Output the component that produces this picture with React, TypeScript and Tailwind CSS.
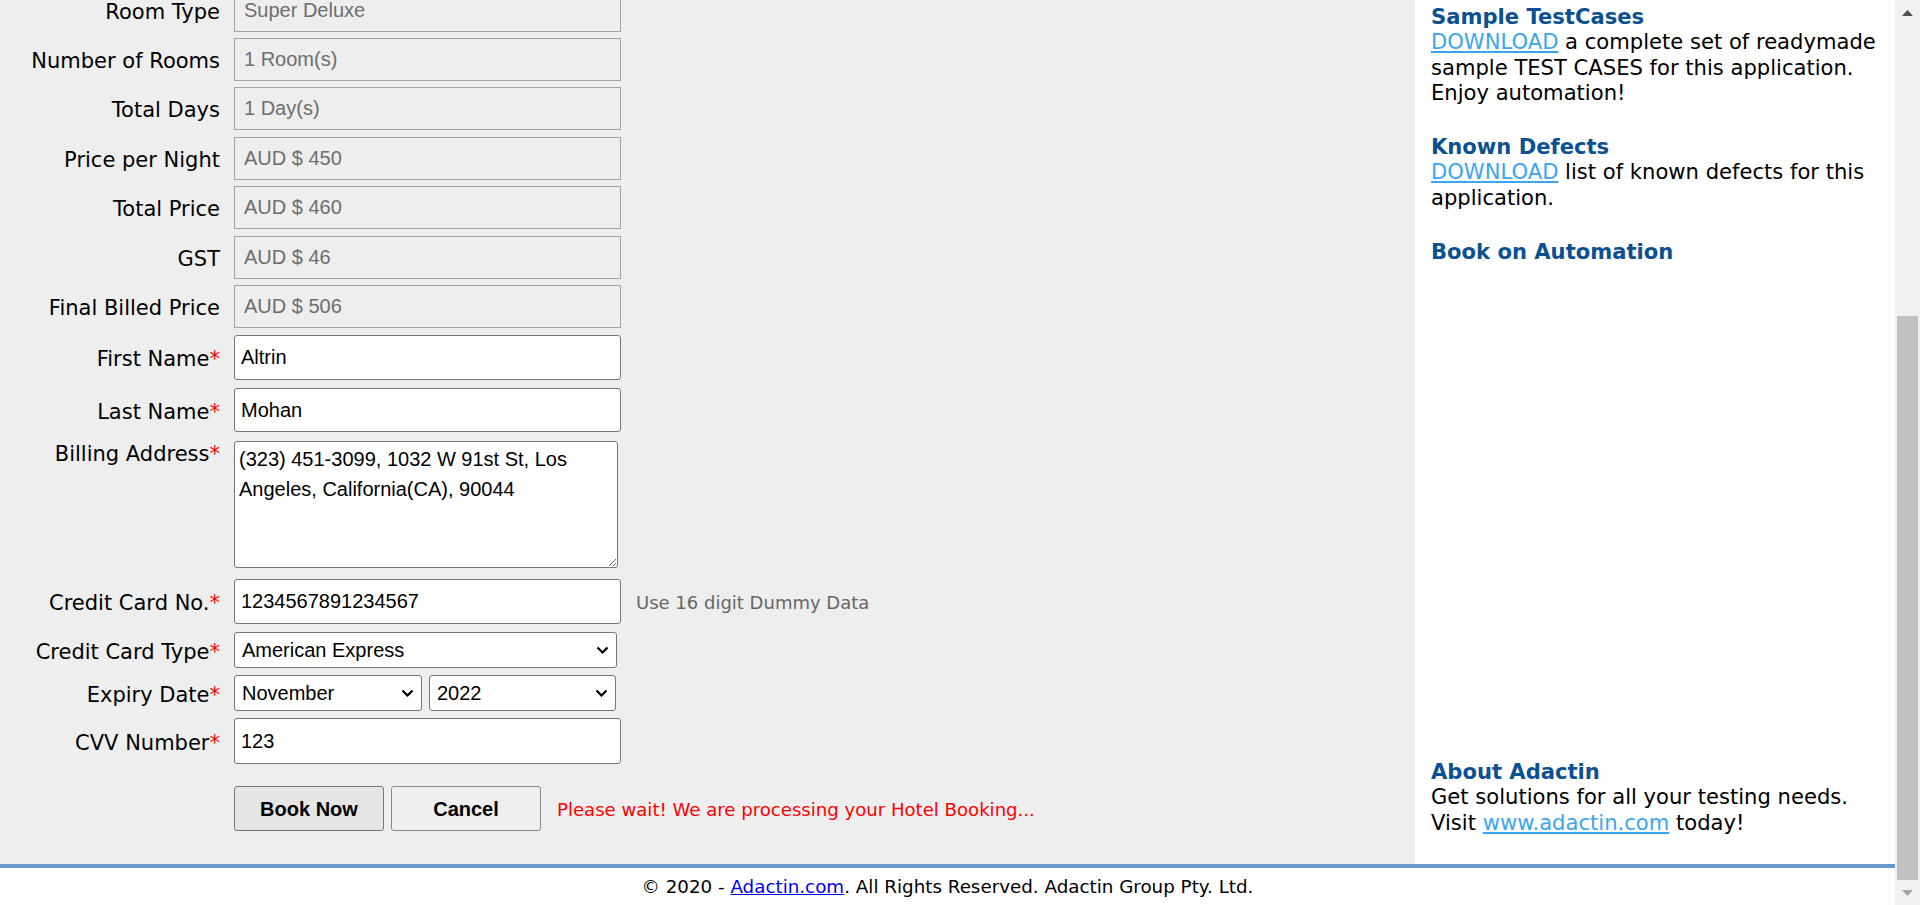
import React from "react";

function Label({ text, req, padClass }: { text: string; req?: boolean; padClass?: string }) {
  return (
    <div
      className={
        "w-[220px] shrink-0 text-right font-['DejaVu_Sans',sans-serif] text-[21px] leading-[25px] text-black " +
        (padClass ?? "pt-[4px]")
      }
    >
      {text}
      {req && <span className="text-[#ff0000]">*</span>}
    </div>
  );
}

function ReadRow({ label, value, rowClass }: { label: string; value: string; rowClass: string }) {
  return (
    <div className={"flex items-center gap-[14px] " + rowClass}>
      <Label text={label} />
      <input
        readOnly
        defaultValue={value}
        className="h-full w-[387px] border border-[#a3a3a3] bg-[#eeeeee] pl-[9px] font-['Liberation_Sans',Arial,sans-serif] text-[20px] text-[#6d6d6d] outline-none"
      />
    </div>
  );
}

function EditRow({ label, value, rowClass, children }: { label: string; value: string; rowClass: string; children?: React.ReactNode }) {
  return (
    <div className={"flex items-center gap-[14px] " + rowClass}>
      <Label text={label} req />
      <input
        defaultValue={value}
        className="h-full w-[387px] rounded-[3px] border border-[#767676] bg-white pl-[6px] font-['Liberation_Sans',Arial,sans-serif] text-[20px] text-black outline-none"
      />
      {children}
    </div>
  );
}

function Chevron() {
  return (
    <svg width="13" height="8" viewBox="0 0 13 8" className="shrink-0">
      <path d="M1.5 1.5 L6.5 6.5 L11.5 1.5" fill="none" stroke="#000" strokeWidth="2.2" />
    </svg>
  );
}

function SelectBox({ value, widthClass }: { value: string; widthClass: string }) {
  return (
    <div
      className={
        "flex h-full items-center justify-between rounded-[3px] border border-[#767676] bg-white pl-[7px] pr-[7px] font-['Liberation_Sans',Arial,sans-serif] text-[20px] text-black " +
        widthClass
      }
    >
      <span>{value}</span>
      <Chevron />
    </div>
  );
}

export default function App() {
  return (
    <div className="flex h-[905px] w-[1920px] overflow-hidden bg-white">
      <div className="flex w-[1895px] flex-col">
        <div className="flex h-[864px]">
          {/* main form */}
          <main className="w-[1415px] overflow-hidden bg-[#eeeeee]">
            <div className="flex flex-col">
              <ReadRow label="Room Type" value="Super Deluxe" rowClass="-mt-[11px] h-[43px]" />
              <ReadRow label="Number of Rooms" value="1 Room(s)" rowClass="mt-[6px] h-[43px]" />
              <ReadRow label="Total Days" value="1 Day(s)" rowClass="mt-[6px] h-[43px]" />
              <ReadRow label="Price per Night" value="AUD $ 450" rowClass="mt-[7px] h-[43px]" />
              <ReadRow label="Total Price" value="AUD $ 460" rowClass="mt-[6px] h-[43px]" />
              <ReadRow label="GST" value="AUD $ 46" rowClass="mt-[7px] h-[43px]" />
              <ReadRow label="Final Billed Price" value="AUD $ 506" rowClass="mt-[6px] h-[43px]" />
              <EditRow label="First Name" value="Altrin" rowClass="mt-[7px] h-[45px]" />
              <EditRow label="Last Name" value="Mohan" rowClass="mt-[8px] h-[44px]" />
              <div className="mt-[9px] flex items-start gap-[14px]">
                <Label text="Billing Address" req padClass="pt-[1px]" />
                <textarea
                  defaultValue="(323) 451-3099, 1032 W 91st St, Los Angeles, California(CA), 90044"
                  className="h-[127px] w-[384px] resize rounded-[3px] border border-[#767676] bg-white pl-[4px] pr-[4px] pt-[2px] font-['Liberation_Sans',Arial,sans-serif] text-[20px] leading-[30px] text-black outline-none"
                />
              </div>
              <EditRow label="Credit Card No." value="1234567891234567" rowClass="mt-[11px] h-[45px]">
                <span className="ml-[1px] pt-[2px] font-['DejaVu_Sans',sans-serif] text-[18px] text-[#666666]">Use 16 digit Dummy Data</span>
              </EditRow>
              <div className="mt-[8px] flex h-[36px] items-center gap-[14px]">
                <Label text="Credit Card Type" req />
                <SelectBox value="American Express" widthClass="w-[383px]" />
              </div>
              <div className="mt-[7px] flex h-[36px] items-center gap-[14px]">
                <Label text="Expiry Date" req />
                <div className="flex h-full gap-[7px]">
                  <SelectBox value="November" widthClass="w-[188px]" />
                  <SelectBox value="2022" widthClass="w-[187px]" />
                </div>
              </div>
              <EditRow label="CVV Number" value="123" rowClass="mt-[7px] h-[46px]" />
              <div className="mt-[22px] flex h-[45px] items-center">
                <div className="w-[234px] shrink-0" />
                <button className="h-full w-[150px] rounded-[3px] border border-[#767676] bg-[#e5e5e5] font-['Liberation_Sans',Arial,sans-serif] text-[20px] font-bold text-black">
                  Book Now
                </button>
                <button className="ml-[7px] h-full w-[150px] rounded-[3px] border border-[#8a8a8a] bg-[#efefef] font-['Liberation_Sans',Arial,sans-serif] text-[20px] font-bold text-black">
                  Cancel
                </button>
                <span className="ml-[16px] pt-[2px] font-['DejaVu_Sans',sans-serif] text-[18.1px] text-[#ff0000]">
                  Please wait! We are processing your Hotel Booking...
                </span>
              </div>
            </div>
          </main>

          {/* sidebar */}
          <aside className="flex w-[480px] flex-col bg-white pb-[29px] pl-4 pr-4 pt-[4px] font-['DejaVu_Sans',sans-serif] text-[21.1px] leading-[25.3px] text-black">
            <div>
              <div className="font-bold text-[#0b5192]">Sample TestCases</div>
              <div>
                <a className="text-[#3ba6f0] underline">DOWNLOAD</a> a complete set of readymade sample TEST CASES for this application. Enjoy automation!
              </div>
            </div>
            <div className="mt-[29px]">
              <div className="font-bold text-[#0b5192]">Known Defects</div>
              <div>
                <a className="text-[#3ba6f0] underline">DOWNLOAD</a> list of known defects for this application.
              </div>
            </div>
            <div className="mt-[29px] font-bold text-[#0b5192]">Book on Automation</div>
            <div className="mt-auto">
              <div className="font-bold text-[#0b5192]">About Adactin</div>
              <div>Get solutions for all your testing needs.</div>
              <div>
                Visit <a className="text-[#3ba6f0] underline">www.adactin.com</a> today!
              </div>
            </div>
          </aside>
        </div>
        <div className="h-[4px] bg-[#6699cc]" />
        <footer className="flex-1 bg-white pt-[8px] text-center font-['DejaVu_Sans',sans-serif] text-[18.3px] leading-[21px] text-black">
          © 2020 - <a className="text-[#0000ee] underline">Adactin.com</a>. All Rights Reserved. Adactin Group Pty. Ltd.
        </footer>
      </div>

      {/* scrollbar */}
      <div className="flex w-[25px] flex-col bg-[#f1f1f1]">
        <div className="flex h-[25px] items-center justify-center">
          <svg width="11" height="6" viewBox="0 0 11 6">
            <path d="M0 6 L5.5 0 L11 6 Z" fill="#505050" />
          </svg>
        </div>
        <div className="flex-1 pl-[2px] pr-[2px]">
          <div className="mt-[291px] h-[564px] bg-[#c1c1c1]" />
        </div>
        <div className="flex h-[25px] items-center justify-center">
          <svg width="11" height="6" viewBox="0 0 11 6">
            <path d="M0 0 L5.5 6 L11 0 Z" fill="#a3a3a3" />
          </svg>
        </div>
      </div>
    </div>
  );
}
